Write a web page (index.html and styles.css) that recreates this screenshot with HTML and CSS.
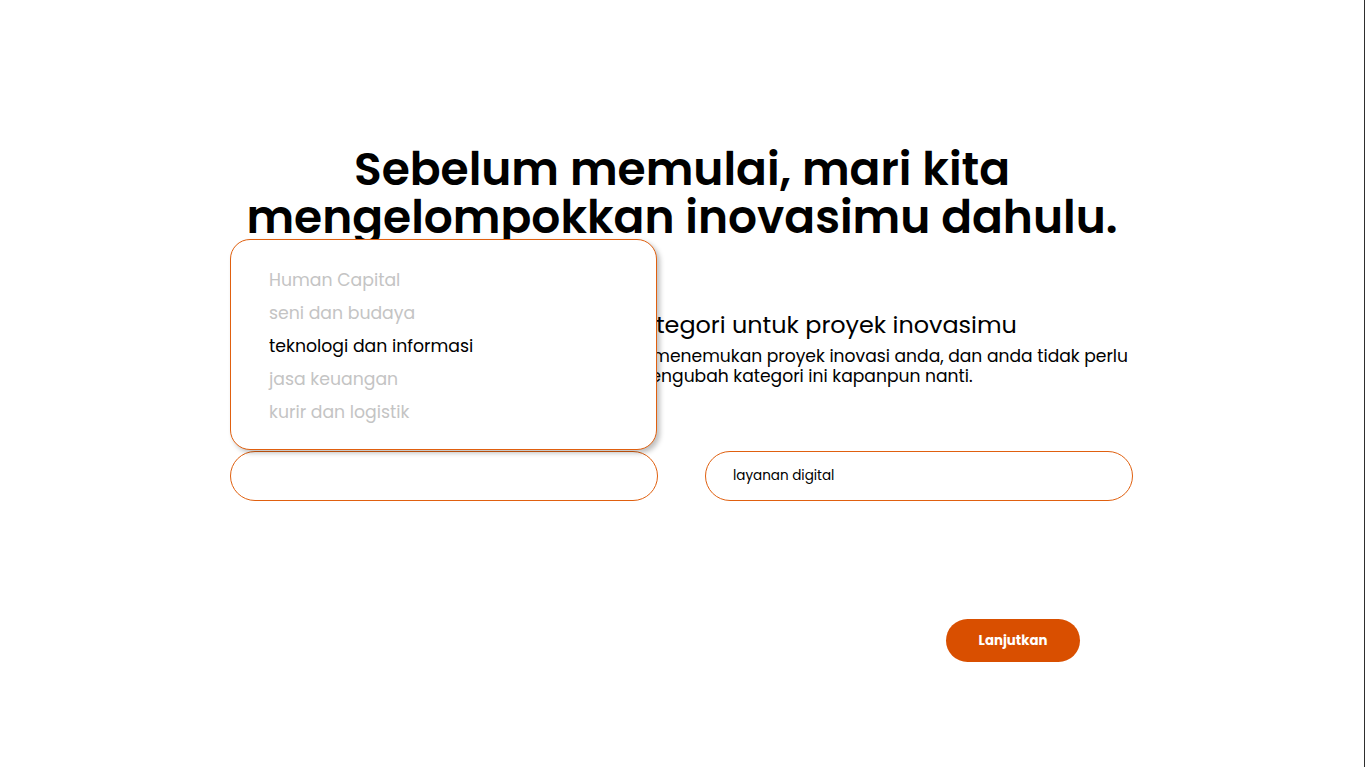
FILE: index.html
```html
<!DOCTYPE html>
<html lang="id">
<head>
    <meta charset="UTF-8">
    <meta name="viewport" content="width=device-width, initial-scale=1.0">
    <title>Kategori Inovasi</title>
    <link rel="stylesheet" href="styles.css">
</head>
<body>
    <div class="page">
        <div class="container">
            <h1 class="title">Sebelum memulai, mari kita<br>mengelompokkan inovasimu dahulu.</h1>

            <h2 class="subtitle">Sekarang silakan pilih salah satu kategori untuk proyek inovasimu</h2>
            <p class="desc">Kategori ini akan membantu kami semua dalam menemukan proyek inovasi anda, dan anda tidak perlu<br>khawatir, karena anda dapat dengan nyaman mengubah kategori ini kapanpun nanti.</p>

            <div class="fields">
                <div class="field">
                    <ul class="dropdown">
                        <li>Human Capital</li>
                        <li>seni dan budaya</li>
                        <li class="active">teknologi dan informasi</li>
                        <li>jasa keuangan</li>
                        <li>kurir dan logistik</li>
                    </ul>
                    <div class="select"></div>
                </div>
                <div class="field">
                    <div class="select">layanan digital</div>
                </div>
            </div>

            <div class="actions">
                <button class="btn">Lanjutkan</button>
            </div>
        </div>
    </div>
</body>
</html>
```

FILE: styles.css
```css
* {
    box-sizing: border-box;
}

body {
    margin: 0;
    font-family: 'Poppins', 'Noto Sans', sans-serif;
    color: #000;
    background: #fff;
}

.page {
    min-height: 767px;
    border-right: 1px solid #2e2e2e;
    padding-top: 145px;
}

.container {
    width: 904px;
    margin: 0 auto;
}

.title {
    margin: 0;
    text-align: center;
    font-size: 45.5px;
    line-height: 48px;
    font-weight: 600;
}

.subtitle {
    margin: 69px 0 0;
    font-size: 23.9px;
    font-weight: 400;
    line-height: 30px;
    white-space: nowrap;
}

.desc {
    margin: 7px 0 0;
    font-size: 17.15px;
    line-height: 19.5px;
    white-space: nowrap;
}

.fields {
    display: grid;
    grid-template-columns: 428px 428px;
    gap: 47px;
    margin-top: 65px;
}

.field {
    position: relative;
}

.select {
    height: 50px;
    border: 1px solid #e0600f;
    border-radius: 25px;
    padding: 0 27px;
    display: flex;
    align-items: center;
    font-size: 13.5px;
}

.dropdown {
    position: absolute;
    left: 0;
    bottom: calc(100% + 1px);
    width: 427px;
    margin: 0;
    padding: 24px 38px 20px;
    list-style: none;
    background: #fff;
    border: 1px solid #e0600f;
    border-radius: 20px;
    box-shadow: 3px 3px 5px rgba(0, 0, 0, 0.25);
}

.dropdown li {
    font-size: 17.3px;
    line-height: 33px;
    color: #c4c4c4;
}

.dropdown li.active {
    color: #000;
}

.actions {
    display: flex;
    justify-content: flex-end;
    padding-right: 54px;
    margin-top: 118px;
}

.btn {
    width: 134px;
    height: 43px;
    border: none;
    border-radius: 22px;
    background: #d94f00;
    color: #fff;
    font-family: inherit;
    font-size: 13.3px;
    font-weight: 700;
    cursor: pointer;
}
```
